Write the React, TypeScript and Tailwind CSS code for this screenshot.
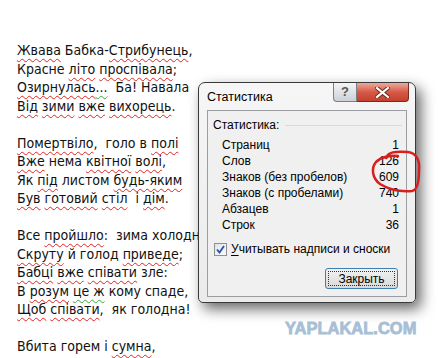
import React from "react";

type Seg = string | { t: string; c: "r" | "g" };

const r = (t: string): Seg => ({ t, c: "r" });
const g = (t: string): Seg => ({ t, c: "g" });

const lines: (Seg[] | null)[] = [
  [r("Жвава"), " Бабка-", r("Стрибунець"), ","],
  ["Красне ", r("літо"), " ", r("проспівала"), ";"],
  [r("Озирнулась"), g("..."), "  Ба! Навала"],
  [r("Від"), " ", r("зими"), " ", r("вже"), " ", r("вихорець"), "."],
  null,
  [r("Помертвіло"), ",  голо в ", r("полі")],
  [r("Вже"), " нема ", r("квітної"), " ", r("волі"), ","],
  ["Як ", r("під"), " листом ", r("будь-яким")],
  [r("Був"), " ", r("готовий"), " ", r("стіл"), "  і ", r("дім"), "."],
  null,
  ["Все ", r("пройшло"), ":  зима холодна,"],
  [r("Скруту"), " й голод ", r("приведе"), ";"],
  [r("Бабці"), " ", r("вже"), " ", r("співати"), " зле:"],
  ["В ", r("розум"), " ", g("це ж"), " кому спаде,"],
  [r("Щоб"), " ", r("співати"), ",  як голодна!"],
  null,
  ["Вбита горем і ", r("сумна"), ","],
];

function Line({ segs }: { segs: Seg[] | null }) {
  if (!segs) return <div className="h-[18.5px]">&nbsp;</div>;
  return (
    <div className="h-[18.5px] whitespace-pre">
      {segs.map((s, i) =>
        typeof s === "string" ? (
          <span key={i}>{s}</span>
        ) : (
          <span
            key={i}
            className={
              s.c === "r"
                ? "underline decoration-wavy decoration-[#e02424] decoration-1 underline-offset-[3px]"
                : "underline decoration-wavy decoration-[#3aa63a] decoration-1 underline-offset-[3px]"
            }
          >
            {s.t}
          </span>
        )
      )}
    </div>
  );
}

const rows: [string, string][] = [
  ["Страниц", "1"],
  ["Слов", "126"],
  ["Знаков (без пробелов)", "609"],
  ["Знаков (с пробелами)", "740"],
  ["Абзацев", "1"],
  ["Строк", "36"],
];

export default function App() {
  return (
    <div className="relative w-[447px] h-[358px] overflow-hidden bg-white">
      <div
        className="pl-[17px] pt-[41px] text-[14px] leading-[18.5px] text-[#111]"
        style={{ fontFamily: '"DejaVu Sans Condensed", "DejaVu Sans", Verdana, sans-serif' }}
      >
        {lines.map((l, i) => (
          <Line key={i} segs={l} />
        ))}
      </div>

      {/* dialog window */}
      <div
        className="absolute left-[198px] top-[82px] w-[218px] h-[221px] flex flex-col rounded-t-[7px] rounded-b-[5px] border border-[#3a3a3a] bg-gradient-to-b from-[#f6f6f6] to-[#ebebeb] shadow-[5px_6px_14px_rgba(0,0,0,0.6)] text-[12px] text-black"
        style={{ fontFamily: '"Liberation Sans", Arial, sans-serif' }}
      >
        <div className="flex h-[27px] justify-between">
          <div className="pl-[8px] pt-[5px] text-[12.5px]">Статистика</div>
          <div className="flex mr-[6px] h-[19px]">
            <div className="w-[24px] h-[19px] rounded-bl-[4px] border border-t-0 border-[#7b7f85] bg-gradient-to-b from-[#f4f5f7] to-[#cdd0d5] flex items-center justify-center text-[13px] text-[#555] font-bold">
              ?
            </div>
            <div className="w-[52px] h-[19px] rounded-br-[4px] border border-t-0 border-l-0 border-[#7a2b20] bg-gradient-to-b from-[#eaaa9c] via-[#d65a46] to-[#c4402f] flex items-center justify-center">
              <svg width="15" height="11" viewBox="0 0 15 11">
                <path
                  d="M2 1 L13 10 M13 1 L2 10"
                  stroke="#5a2a24"
                  strokeWidth="4"
                  strokeLinecap="square"
                />
                <path
                  d="M2 1 L13 10 M13 1 L2 10"
                  stroke="#ffffff"
                  strokeWidth="2.2"
                  strokeLinecap="square"
                />
              </svg>
            </div>
          </div>
        </div>

        <div className="mx-[8px] mb-[5px] flex-1 border border-[#9a9ea3] bg-[#f0f0f0] flex flex-col">
          <div className="flex items-center pl-[5px] pt-[6px] h-[22px] pr-[4px]">
            <span className="leading-[16px]">Статистика:</span>
            <div className="flex-1 ml-[6px] h-px bg-[#d6dadf]" />
          </div>
          <div className="mt-[4px] flex flex-col pl-[14px] pr-[7px]">
            {rows.map(([k, v]) => (
              <div key={k} className="flex justify-between h-[16px] leading-[16px]">
                <span>{k}</span>
                <span>{v}</span>
              </div>
            ))}
          </div>
          <div className="mt-[8px] flex items-center pl-[6px] h-[16px]">
            <div className="w-[13px] h-[13px] border border-[#8f8f8f] bg-gradient-to-br from-[#dfe3ea] to-[#fbfbfb] flex items-center justify-center">
              <svg width="9" height="9" viewBox="0 0 9 9">
                <path d="M1 4.5 L3.5 7.5 L8 1" stroke="#2b4ea8" strokeWidth="1.8" fill="none" />
              </svg>
            </div>
            <span className="ml-[4px] leading-[16px]">
              <span className="underline underline-offset-2">У</span>читывать надписи и сноски
            </span>
          </div>
          <div className="mt-[11px] flex justify-end pr-[8px]">
            <div className="w-[73px] h-[21px] rounded-[3px] border border-[#3c7fb1] bg-gradient-to-b from-[#f2f2f2] to-[#d9d9d9] p-[2px]">
              <div className="w-full h-full border border-dotted border-[#333] flex items-center justify-center">
                Закрыть
              </div>
            </div>
          </div>
        </div>
      </div>

      {/* hand-drawn red circle */}
      <svg
        className="absolute left-0 top-0"
        width="447"
        height="358"
        viewBox="0 0 447 358"
      >
        <path
          d="M386 158 C388 152 395 151 408 152 C416 153 420 160 419 170 C419 180 418 190 412 191 C400 192 388 189 380 184 C372 178 371 168 376 162 C381 157 390 155 398 156"
          stroke="#d81e1e"
          strokeWidth="2.5"
          fill="none"
          strokeLinecap="round"
        />
      </svg>

      <div
        className="absolute left-[285px] top-[320px] text-[16.5px] font-black text-[#a7bfd6] leading-none [-webkit-text-stroke:0.8px_#a7bfd6]"
        style={{ fontFamily: '"Liberation Sans", Arial, sans-serif' }}
      >
        YAPLAKAL.COM
      </div>
    </div>
  );
}
